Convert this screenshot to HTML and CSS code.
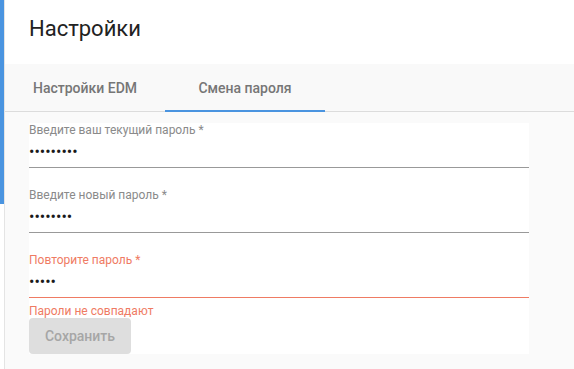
FILE: index.html
```html
<!DOCTYPE html>
<html lang="ru">
  <head>
    <meta charset="utf-8" />
    <meta name="viewport" content="width=device-width, initial-scale=1" />
    <title>Настройки</title>
    <link rel="stylesheet" href="styles.css">
  </head>
  <body>
    <div class="app">
      <!-- Sidebar edge -->
      <div class="sidebar">
        <div class="sidebar-active"></div>
      </div>

      <main class="page">
        <header class="page-header">
          <h1 class="page-title">Настройки</h1>
        </header>

        <nav class="tabs">
          <div class="tab">Настройки EDM</div>
          <div class="tab active">Смена пароля</div>
        </nav>

        <section class="content">
          <form class="card" onsubmit="return false">
            <div class="field">
              <label class="field-label">Введите ваш текущий пароль *</label>
              <input class="field-input" type="password" value="123456789" />
            </div>
            <div class="field">
              <label class="field-label">Введите новый пароль *</label>
              <input class="field-input" type="password" value="12345678" />
            </div>
            <div class="field error">
              <label class="field-label">Повторите пароль *</label>
              <input class="field-input" type="password" value="12345" />
              <div class="field-error">Пароли не совпадают</div>
            </div>
            <button class="btn-save" type="submit" disabled>Сохранить</button>
          </form>
        </section>
      </main>
    </div>
  </body>
</html>
```

FILE: styles.css
```css
* {
  margin: 0;
  padding: 0;
  box-sizing: border-box;
}

body {
  font-family: 'Roboto', 'Liberation Sans', sans-serif;
  -webkit-font-smoothing: antialiased;
  background-color: #fafafa;
  color: #212121;
}

.app {
  display: flex;
  min-height: 100vh;
}

/* Sidebar edge */
.sidebar {
  width: 5px;
  flex-shrink: 0;
  background: #fff;
  border-right: 1px solid #e4e4e4;
}

.sidebar-active {
  width: 4px;
  height: 204px;
  background: #4a94e0;
}

.page {
  flex: 1;
  display: flex;
  flex-direction: column;
}

.page-header {
  height: 64px;
  background: #fff;
  padding: 16px 0 0 24px;
}

.page-title {
  font-size: 22px;
  font-weight: 400;
  line-height: 26px;
  color: #222;
}

/* Tabs */
.tabs {
  display: flex;
  height: 48px;
  background: #f9f9f9;
  box-shadow: inset 0 -1px 0 #dcdcdc;
}

.tab {
  width: 160px;
  text-align: center;
  font-size: 14px;
  font-weight: 500;
  line-height: 48px;
  color: #767676;
}

.tab.active {
  box-shadow: inset 0 -2px 0 #4a94e0;
}

/* Form */
.content {
  flex: 1;
  padding: 11px 0 0 24px;
}

.card {
  width: 500px;
  background: #fff;
  display: flex;
  flex-direction: column;
  align-items: flex-start;
}

.field {
  width: 100%;
  margin-bottom: 20px;
}

.field.error {
  margin-bottom: 0;
}

.field-label {
  display: block;
  font-size: 12px;
  line-height: 14px;
  color: #8a8a8a;
}

.field-input {
  display: block;
  width: 100%;
  height: 31px;
  border: none;
  border-bottom: 1px solid #999;
  outline: none;
  background: transparent;
  font-family: inherit;
  font-size: 16px;
  color: #1a1a1a;
  padding: 0 0 1px 0;
}

.field.error .field-label,
.field-error {
  color: #ef7b63;
}

.field.error .field-input {
  border-bottom-color: #ef7b63;
}

.field-error {
  font-size: 12px;
  line-height: 14px;
  margin-top: 6px;
}

.btn-save {
  width: 102px;
  height: 36px;
  border: none;
  border-radius: 4px;
  background: #dedede;
  color: #a6a6a6;
  font-family: inherit;
  font-size: 14px;
  font-weight: 500;
}
```
